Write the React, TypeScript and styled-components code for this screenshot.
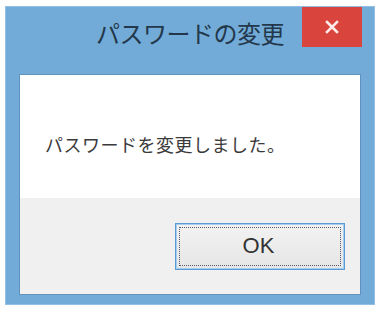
import React from "react";
import styled, { createGlobalStyle } from "styled-components";

const Global = createGlobalStyle`
  html, body { margin: 0; padding: 0; background: #ffffff; }
  body { font-family: "Noto Sans CJK JP", "Noto Sans", sans-serif; }
`;

const Page = styled.div`
  padding: 6px 0 0 5px;
`;

const Window = styled.div`
  width: 370px;
  height: 299px;
  box-sizing: border-box;
  background: #72abd7;
  border: 1px solid #92bfe3;
  display: flex;
  flex-direction: column;
  padding: 0 13px 9px 13px;
`;

const TitleBar = styled.div`
  height: 67px;
  display: grid;
  grid-template-columns: 1fr auto 1fr;
  align-items: start;
  margin: 0 -1px;
`;

const Title = styled.div`
  grid-column: 2;
  padding-top: 10px;
  font-size: 24px;
  line-height: 32px;
  color: #23384b;
  letter-spacing: -0.5px;
  white-space: nowrap;
`;

const CloseButton = styled.div`
  grid-column: 3;
  justify-self: end;
  width: 60px;
  height: 40px;
  background: #d9443d;
  display: flex;
  align-items: center;
  justify-content: center;
`;

const Body = styled.div`
  flex: 1;
  display: flex;
  flex-direction: column;
  border: 1px solid #5f93bd;
`;

const MessageArea = styled.div`
  height: 123px;
  background: #ffffff;
  padding-left: 25px;
  display: flex;
  align-items: center;
  box-sizing: border-box;
  padding-top: 14px;
`;

const Message = styled.div`
  font-size: 18px;
  color: #3a3a3a;
  letter-spacing: 0.5px;
  white-space: nowrap;
`;

const ButtonArea = styled.div`
  flex: 1;
  background: #f0f0f0;
  display: flex;
  justify-content: flex-end;
  align-items: center;
  padding-right: 15px;
`;

const OkButton = styled.div`
  width: 170px;
  height: 47px;
  box-sizing: border-box;
  border: 1px solid #5a9bd6;
  box-shadow: inset 0 0 0 1px #a6cdee;
  background: linear-gradient(#f2f2f2, #e6e6e6);
  padding: 3px;
  display: flex;
`;

const FocusRing = styled.div`
  flex: 1;
  border: 1px dotted #555a66;
  display: flex;
  align-items: center;
  justify-content: center;
  padding-right: 3px;
  font-family: "Liberation Sans", Arial, sans-serif;
  font-size: 22px;
  color: #333333;
`;

export default function App() {
  return (
    <>
      <Global />
      <Page>
        <Window>
          <TitleBar>
            <Title>パスワードの変更</Title>
            <CloseButton>
              <svg width="14" height="14" viewBox="0 0 14 14">
                <path d="M2 2 L12 12 M12 2 L2 12" stroke="#fbeaea" strokeWidth="2.6" strokeLinecap="square" />
              </svg>
            </CloseButton>
          </TitleBar>
          <Body>
            <MessageArea>
              <Message>パスワードを変更しました。</Message>
            </MessageArea>
            <ButtonArea>
              <OkButton>
                <FocusRing>OK</FocusRing>
              </OkButton>
            </ButtonArea>
          </Body>
        </Window>
      </Page>
    </>
  );
}
